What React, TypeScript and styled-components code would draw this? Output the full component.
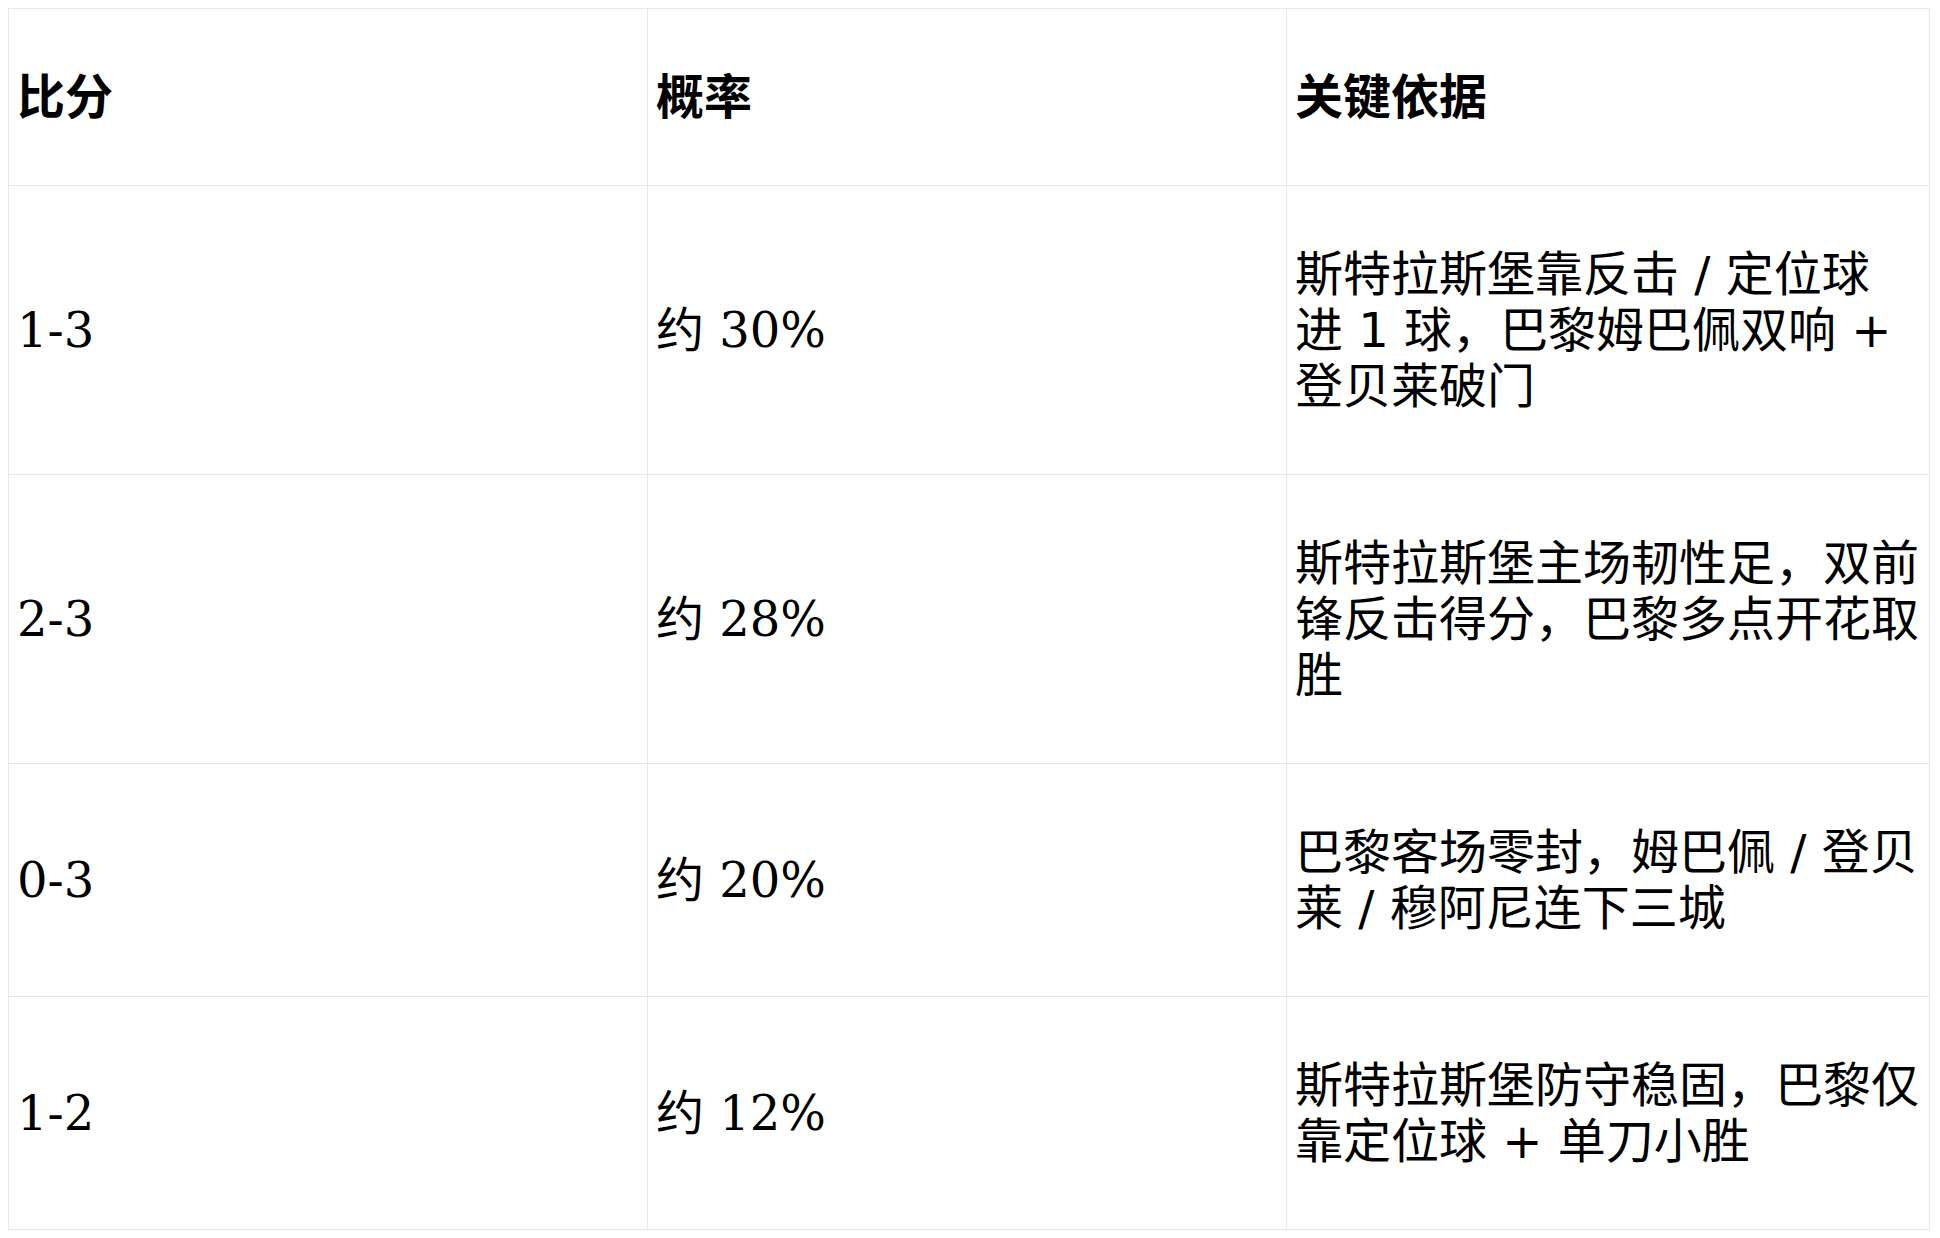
import React from 'react'
import styled, { createGlobalStyle } from 'styled-components'

const GlobalStyle = createGlobalStyle`
  html {
    overflow: hidden;
  }
  body {
    margin: 8px;
    background: #ffffff;
    color: #000000;
    font-family: 'DejaVu Serif', 'Noto Sans CJK SC', serif;
  }
`

const Table = styled.table`
  width: 1921px;
  border-collapse: collapse;
  table-layout: fixed;
  font-size: 48px;
  line-height: 56px;
`

const Col = styled.col<{ $w: number }>`
  width: ${(p) => p.$w}px;
`

const HeadCell = styled.th`
  border: 1px solid #e5e7eb;
  padding: 60px 8px;
  text-align: left;
  vertical-align: middle;
  font-weight: 700;
  font-family: 'DejaVu Serif', 'Noto Sans CJK SC', serif;
`

const Cell = styled.td<{ $sans?: boolean }>`
  border: 1px solid #e5e7eb;
  padding: 60px 8px;
  text-align: left;
  vertical-align: middle;
  font-family: ${(p) =>
    p.$sans
      ? `'DejaVu Sans', 'Noto Sans CJK SC', sans-serif`
      : `'DejaVu Serif', 'Noto Sans CJK SC', serif`};
`

const rows = [
  { score: '1-3', prob: '约 30%', reason: '斯特拉斯堡靠反击 / 定位球进\u00a01\u00a0球，巴黎姆巴佩双响 + 登贝莱破门' },
  { score: '2-3', prob: '约 28%', reason: '斯特拉斯堡主场韧性足，双前锋反击得分，巴黎多点开花取胜' },
  { score: '0-3', prob: '约 20%', reason: '巴黎客场零封，姆巴佩 / 登贝莱 / 穆阿尼连下三城' },
  { score: '1-2', prob: '约 12%', reason: '斯特拉斯堡防守稳固，巴黎仅靠定位球 + 单刀小胜' },
]

export default function App() {
  return (
    <>
      <GlobalStyle />
      <Table>
        <colgroup>
          <Col $w={639} />
          <Col $w={639} />
          <Col $w={643} />
        </colgroup>
        <thead>
          <tr>
            <HeadCell>比分</HeadCell>
            <HeadCell>概率</HeadCell>
            <HeadCell>关键依据</HeadCell>
          </tr>
        </thead>
        <tbody>
          {rows.map((r) => (
            <tr key={r.score}>
              <Cell>{r.score}</Cell>
              <Cell>{r.prob}</Cell>
              <Cell $sans>{r.reason}</Cell>
            </tr>
          ))}
        </tbody>
      </Table>
    </>
  )
}
